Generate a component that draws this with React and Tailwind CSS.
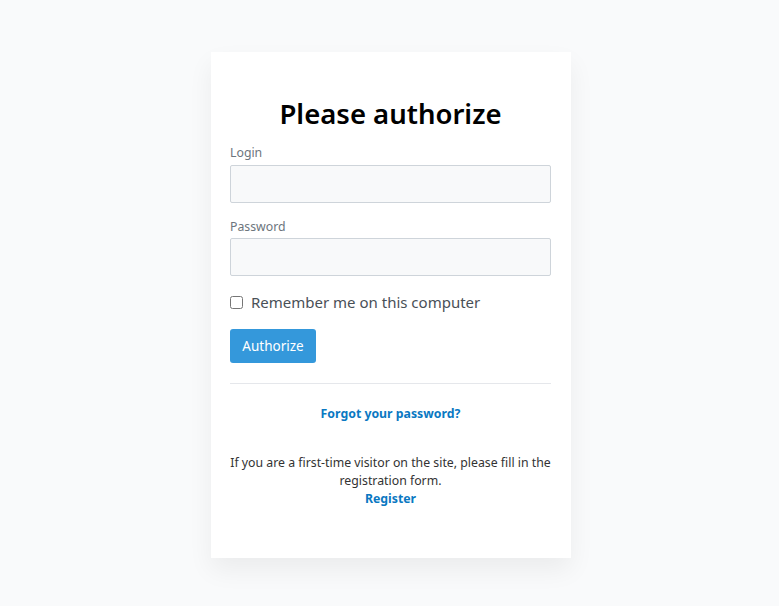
import React, { useState } from "react";

const App = () => {
  // remember me checkbox state
  const [remember, setRemember] = useState(false);

  return (
    <div
      className="min-h-screen w-full bg-[#f9fafb] pt-[52px]"
      style={{ fontFamily: '"Noto Sans", "Open Sans", sans-serif' }}
    >
      <div className="ml-[211px] w-[360px] bg-white pl-[19px] pr-[20px] pt-[42px] pb-[50px] shadow-[0_12px_24px_rgba(0,0,0,0.06)]">
        <h1 className="text-center text-[27.5px] font-semibold leading-[40px] text-black">
          Please authorize
        </h1>

        <form className="mt-[10px]" onSubmit={(e) => e.preventDefault()}>
          <label className="block text-[12.3px] leading-[18px] text-[#6c757d]">Login</label>
          <input
            type="text"
            className="mt-[3px] block h-[38px] w-full rounded-[2px] border border-[#ced4da] bg-[#f8f9fa] px-2 outline-none"
          />

          <label className="mt-[15px] block text-[12.3px] leading-[18px] text-[#6c757d]">Password</label>
          <input
            type="password"
            className="mt-[2px] block h-[38px] w-full rounded-[2px] border border-[#ced4da] bg-[#f8f9fa] px-2 outline-none"
          />

          <label className="mt-[15px] flex items-center gap-[8px] text-[15px] leading-[22px] text-[#495057]">
            <input
              type="checkbox"
              checked={remember}
              onChange={() => setRemember(!remember)}
              className="h-[13px] w-[13px]"
            />
            Remember me on this computer
          </label>

          <button
            type="submit"
            className="mt-[16px] h-[34px] w-[86px] rounded-[3px] bg-[#3498db] text-[13.5px] text-white"
          >
            Authorize
          </button>
        </form>

        <hr className="mt-[20px] border-t border-[#e5e7eb]" />

        <div className="mt-[16px] text-center">
          <a href="#" className="text-[12.3px] font-bold leading-[18px] text-[#0a78c2]">
            Forgot your password?
          </a>
        </div>

        <p className="mt-[30px] text-center text-[12.3px] leading-[18px] text-[#333]">
          If you are a first-time visitor on the site, please fill in the registration form.
          <br />
          <a href="#" className="font-bold text-[#0a78c2]">
            Register
          </a>
        </p>
      </div>
    </div>
  );
};

export default App;
